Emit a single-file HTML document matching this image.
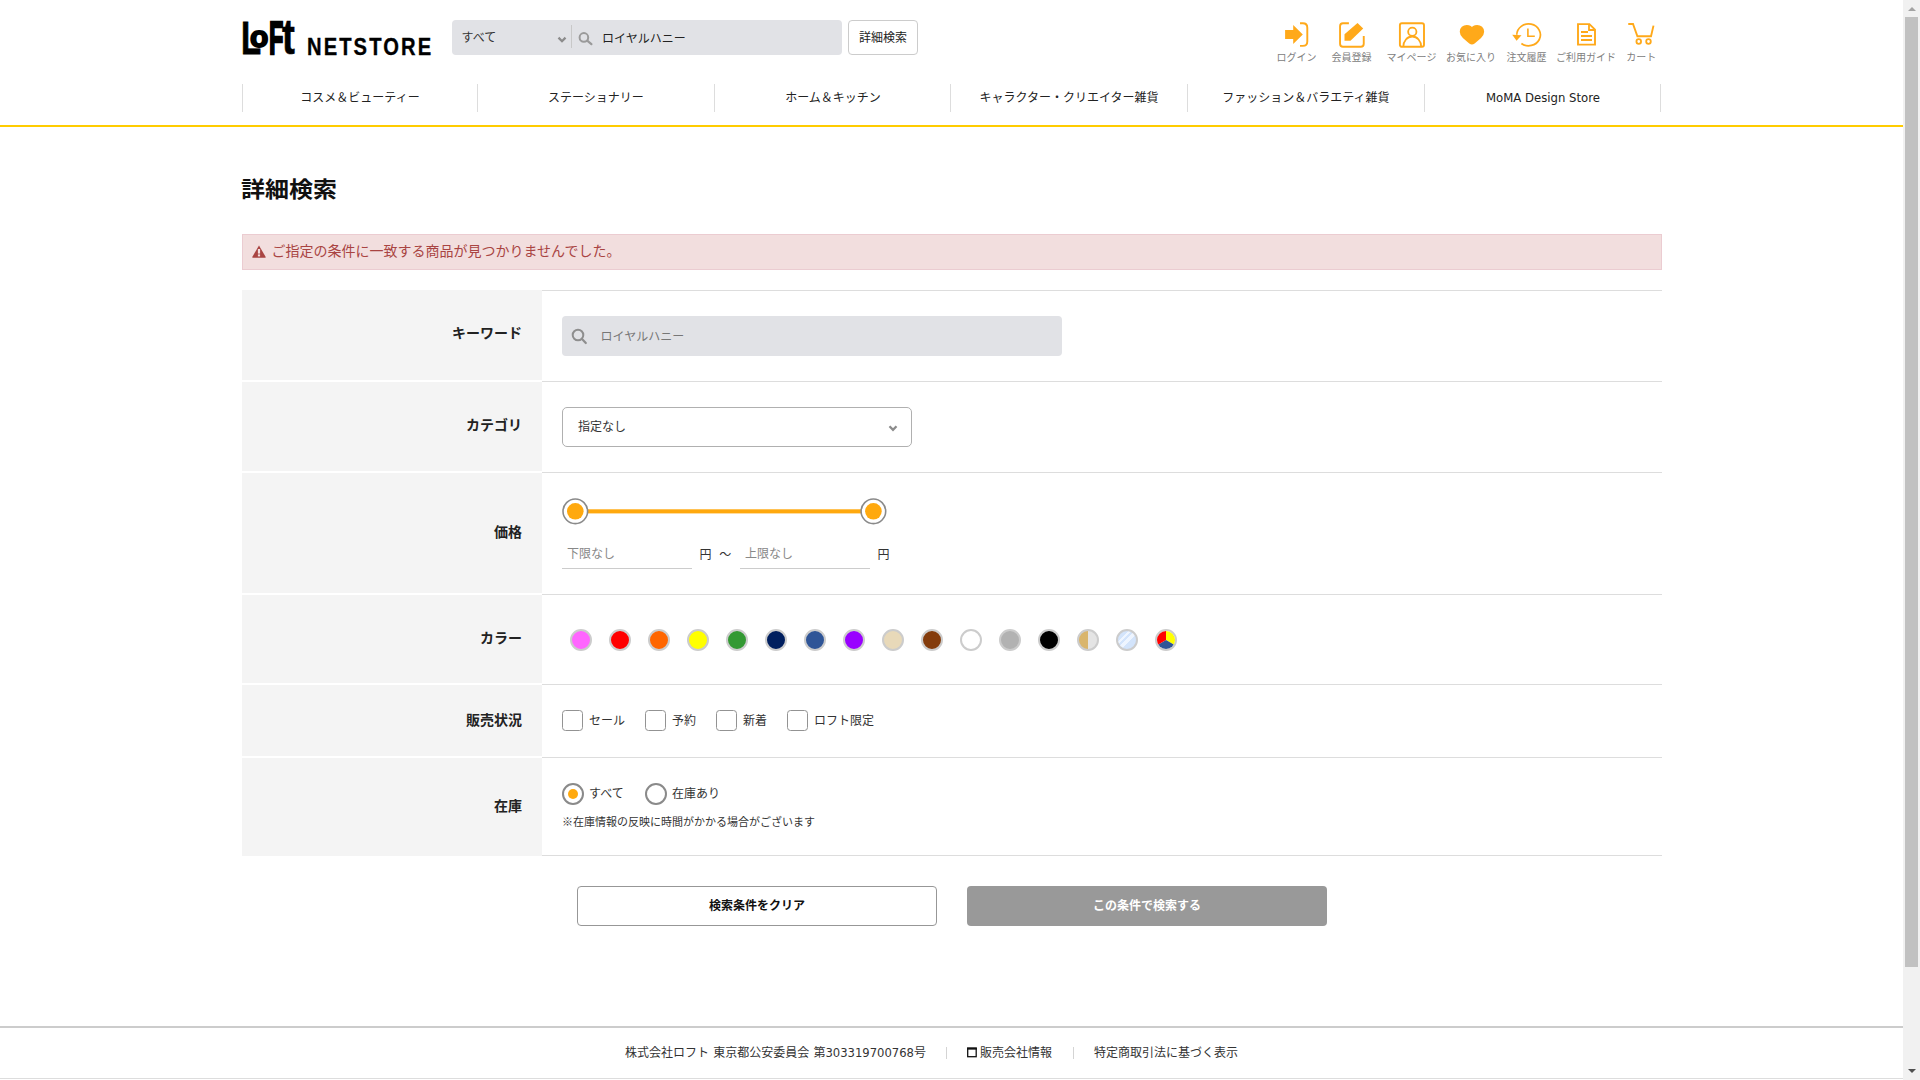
<!DOCTYPE html>
<html lang="ja">
<head>
<meta charset="utf-8">
<title>詳細検索 | ロフトネットストア</title>
<style>
*{box-sizing:border-box;margin:0;padding:0}
html,body{width:1920px;height:1080px;overflow:hidden;background:#fff}
body{position:relative;font-family:"Liberation Sans","Noto Sans CJK JP",sans-serif;color:#222;font-size:12px;line-height:1}
.abs{position:absolute}
.k12{font-size:12px}
.k14{font-size:14px}
.k10{font-size:10px}
.t{position:absolute;white-space:nowrap;line-height:1}
/* scrollbar */
#sb{position:absolute;left:1903px;top:0;width:17px;height:1080px;background:#f1f1f1}
#sb .thumb{position:absolute;left:2px;top:17px;width:13px;height:950px;background:#c1c1c1}
#sb .up,#sb .dn{position:absolute;left:4.5px;width:0;height:0;border-left:4px solid transparent;border-right:4px solid transparent}
#sb .up{top:7px;border-bottom:4px solid #a3a3a3}
#sb .dn{top:1069px;border-top:4px solid #505050}
/* header */
#logo{position:absolute;left:242px;top:20px;width:190px;height:36px}
#search{position:absolute;left:452px;top:20px;width:390px;height:35px;background:#e1e2e6;border-radius:4px}
#search .div{position:absolute;left:119px;top:5px;width:1px;height:23px;background:#c8c8c8}
#adv{position:absolute;left:848px;top:20px;width:70px;height:35px;border:1px solid #ccc;border-radius:4px;background:#fff;text-align:center;line-height:35px;font-size:12px;color:#222}
.hi{position:absolute;top:53.4px;font-size:10px;color:#808080;transform:translateX(-50%);white-space:nowrap;line-height:10px}
.ic{position:absolute;overflow:visible}
.lg{position:absolute;font-weight:bold;color:#000;line-height:1;white-space:nowrap;transform-origin:0 0;font-family:"Liberation Sans",sans-serif}
/* nav */
.sep{position:absolute;top:84px;width:1px;height:28px;background:#ddd}
.nv{position:absolute;top:84px;width:236px;height:28px;line-height:29px;text-align:center;font-size:12px;color:#222;white-space:nowrap}
#yl{position:absolute;left:0;top:125px;width:1903px;height:2px;background:#ffcc00}
/* main */
h1{position:absolute;left:241px;top:177.4px;font-size:24px;font-weight:bold;line-height:24px;color:#111;white-space:nowrap;transform:scaleY(.92);transform-origin:0 100%}
#alert{position:absolute;left:242px;top:234px;width:1420px;height:36px;background:#f2dede;border:1px solid #ebccd1;color:#a94442;font-size:14px}
.th{position:absolute;left:242px;width:300px;background:#f4f4f4}
.th span{position:absolute;right:20px;font-size:14px;font-weight:bold;color:#222;white-space:nowrap;line-height:14px}
.ln{position:absolute;left:542px;width:1120px;height:1px;background:#ddd}
#kw{position:absolute;left:562px;top:316px;width:500px;height:40px;background:#e1e2e6;border-radius:4px}
#cat{position:absolute;left:562px;top:407px;width:350px;height:40px;border:1px solid #b0b0b0;border-radius:5px;background:#fff}
.pin{position:absolute;top:540px;width:130px;height:29px;border-bottom:1px solid #ccc}
.pin span{position:absolute;left:5px;top:8px;font-size:12px;color:#888;line-height:12px}
.cc{position:absolute;top:629px;width:22px;height:22px;border-radius:50%;border:2px solid #ccc;overflow:hidden}
.cb{position:absolute;top:710px;width:21px;height:21px;border:1px solid #939393;border-radius:3.5px;background:#fff}
.cl{position:absolute;top:715.3px;font-size:12px;color:#333;line-height:12px;white-space:nowrap}
.rd{position:absolute;top:783px;width:22px;height:22px;border:2px solid #8a8a8a;border-radius:50%;background:#fff}
.btn{position:absolute;top:886px;width:360px;height:40px;border-radius:4px;text-align:center;font-size:12px;font-weight:bold;line-height:39px}
/* footer */
.ft{position:absolute;top:1047px;font-size:12px;color:#333;line-height:12px;white-space:nowrap}
</style>
</head>
<body>
<!-- HEADER -->
<div id="logo"><span class="lg" style="left:-1.2px;top:-6.2px;font-size:47px;transform:scaleX(.7);-webkit-text-stroke:.8px #000">L</span><span class="lg" style="left:8px;top:1.6px;font-size:30px;-webkit-text-stroke:1.8px #000">o</span><span class="lg" style="left:26.9px;top:-6.2px;font-size:47px;transform:scaleX(.5);-webkit-text-stroke:2.4px #000">F</span><span class="lg" style="left:39.5px;top:-8.9px;font-size:47px;transform:scale(.82,1.07);-webkit-text-stroke:.6px #000">t</span> <span class="lg" style="left:65px;top:14.6px;font-size:24px;letter-spacing:2.5px;transform:scaleX(.84);-webkit-text-stroke:.35px #000">NETSTORE</span></div>
<div id="search">
  <span class="t k12" style="left:9.5px;top:12px;color:#333">すべて</span>
  <svg class="ic" style="left:105.2px;top:15.6px" width="10" height="8" viewBox="0 0 10 8"><path d="M1.5 1.6 L5 5.2 L8.5 1.6" fill="none" stroke="#8c8c8c" stroke-width="2.3"/></svg>
  <div class="div"></div>
  <svg class="ic" style="left:125px;top:10px" width="18" height="18" viewBox="0 0 18 18"><circle cx="6.9" cy="7.4" r="4.3" fill="none" stroke="#9a9a9a" stroke-width="2"/><path d="M10.2 10.7 L14.4 14.2" stroke="#9a9a9a" stroke-width="2.2" stroke-linecap="round"/></svg>
  <span class="t k12" style="left:150px;top:12.5px;color:#222">ロイヤルハニー</span>
</div>
<div id="adv">詳細検索</div>

<div id="icons">
<!-- login -->
<svg class="ic" style="left:1282px;top:21px" width="28" height="28" viewBox="0 0 28 28"><polygon points="3.1,9.1 11.2,9.1 11.2,4.1 20.8,13.6 11.2,23.1 11.2,17.9 3.1,17.9" fill="#ffa91a"/><path d="M18 2.2 H20.8 Q25.3 2.2 25.3 6.7 V20.4 Q25.3 24.9 20.8 24.9 H18" fill="none" stroke="#ffa91a" stroke-width="1.9"/></svg>
<span class="hi" style="left:1296.5px">ログイン</span>
<!-- register -->
<svg class="ic" style="left:1338px;top:21px" width="28" height="28" viewBox="0 0 28 28"><path d="M10.9 2.2 H5 Q2.05 2.2 2.05 5.2 V22.8 Q2.05 25.75 5 25.75 H22.8 Q25.75 25.75 25.75 22.8 V15" fill="none" stroke="#ffa91a" stroke-width="1.9"/><polygon points="6.5,19.7 6.5,13.2 19.5,2 25.2,7.5 12.5,19.7" fill="#ffa91a"/></svg>
<span class="hi" style="left:1351.6px">会員登録</span>
<!-- mypage -->
<svg class="ic" style="left:1398px;top:21px" width="28" height="28" viewBox="0 0 28 28"><rect x="1.9" y="2.2" width="24.1" height="23.6" rx="2" fill="none" stroke="#ffa91a" stroke-width="1.9"/><circle cx="14.3" cy="10.7" r="4.15" fill="none" stroke="#ffa91a" stroke-width="1.8"/><path d="M5.3 25.8 A8.95 10.3 0 0 1 23.2 25.8" fill="none" stroke="#ffa91a" stroke-width="1.8"/></svg>
<span class="hi" style="left:1411.5px">マイページ</span>
<!-- favorite -->
<svg class="ic" style="left:1458px;top:21px" width="28" height="28" viewBox="0 0 28 28"><path d="M13.95 8.6 C13 6.7 11 5.6 8.8 5.6 C5.7 5.6 3.4 7.8 3.4 10.7 C3.4 13 4.6 14.6 6.2 16.1 L12.3 21.2 Q13.95 22.5 15.6 21.2 L21.7 16.1 C23.3 14.6 24.5 13 24.5 10.7 C24.5 7.8 22.2 5.6 19.1 5.6 C16.9 5.6 14.9 6.7 13.95 8.6 Z" fill="#ffa91a" stroke="#ffa91a" stroke-width="3.3" stroke-linejoin="round"/></svg>
<span class="hi" style="left:1471px">お気に入り</span>
<!-- history -->
<svg class="ic" style="left:1511px;top:21px" width="32" height="28" viewBox="0 0 32 28"><path d="M5.8 13.85 A11.8 10.9 0 1 1 10.4 22.5" fill="none" stroke="#ffa91a" stroke-width="1.75"/><polygon points="1.2,13.7 10.5,14.3 5.6,19.7" fill="#ffa91a"/><path d="M16.9 7.4 V15.3 H23.8" fill="none" stroke="#ffa91a" stroke-width="1.6"/></svg>
<span class="hi" style="left:1526.5px">注文履歴</span>
<!-- guide -->
<svg class="ic" style="left:1576px;top:21px" width="22" height="28" viewBox="0 0 22 28"><path d="M2 3.1 H13.4 L19 8.6 V23.6 H2 Z" fill="none" stroke="#ffa91a" stroke-width="1.9"/><path d="M13 3.4 V9 H18.8" fill="none" stroke="#ffa91a" stroke-width="1.8"/><path d="M5 10.9 H12 M5 15 H16 M5 19 H16" stroke="#ffa91a" stroke-width="2"/></svg>
<span class="hi" style="left:1586px">ご利用ガイド</span>
<!-- cart -->
<svg class="ic" style="left:1627px;top:21px" width="28" height="28" viewBox="0 0 28 28"><path d="M1.25 3 H6 L10.4 15.3 H24 L26.5 4.6" fill="none" stroke="#ffa91a" stroke-width="1.9"/><circle cx="11.75" cy="20.5" r="2.3" fill="none" stroke="#ffa91a" stroke-width="1.8"/><circle cx="21.5" cy="20.5" r="2.3" fill="none" stroke="#ffa91a" stroke-width="1.8"/></svg>
<span class="hi" style="left:1641.3px">カート</span>
</div>

<!-- NAV -->
<div id="nav">
<i class="sep" style="left:242px"></i><i class="sep" style="left:477px"></i><i class="sep" style="left:714px"></i><i class="sep" style="left:950px"></i><i class="sep" style="left:1187px"></i><i class="sep" style="left:1424px"></i><i class="sep" style="left:1660px"></i>
<div class="nv" style="left:242px">コスメ＆ビューティー</div>
<div class="nv" style="left:478px">ステーショナリー</div>
<div class="nv" style="left:715px">ホーム＆キッチン</div>
<div class="nv" style="left:951px">キャラクター・クリエイター雑貨</div>
<div class="nv" style="left:1188px">ファッション＆バラエティ雑貨</div>
<div class="nv" style="left:1425px;font-family:'DejaVu Sans','Liberation Sans',sans-serif;font-size:11.7px;line-height:28.5px">MoMA Design Store</div>
</div>
<div id="yl"></div>

<!-- MAIN -->
<h1>詳細検索</h1>
<div id="alert">
  <svg class="ic" style="left:9px;top:9.6px" width="14" height="13" viewBox="0 0 14 13"><path d="M7 0.4 L13.6 11.8 Q13.9 12.8 12.9 12.8 H1.1 Q0.1 12.8 0.4 11.8 Z" fill="#a94442"/><rect x="5.9" y="4" width="2.2" height="4.6" fill="#f2dede"/><rect x="5.9" y="9.4" width="2.2" height="2" fill="#f2dede"/></svg>
  <span class="t" style="left:28.5px;top:9px;font-size:14px;line-height:14px">ご指定の条件に一致する商品が見つかりませんでした。</span>
</div>

<div id="form">
<!-- left header cells -->
<div class="th" style="top:290px;height:90px"><span style="top:36.4px">キーワード</span></div>
<div class="th" style="top:382px;height:89px"><span style="top:36.4px">カテゴリ</span></div>
<div class="th" style="top:473px;height:120px"><span style="top:52px">価格</span></div>
<div class="th" style="top:595px;height:88px"><span style="top:36px">カラー</span></div>
<div class="th" style="top:685px;height:71px"><span style="top:28px">販売状況</span></div>
<div class="th" style="top:758px;height:98px"><span style="top:41px">在庫</span></div>
<!-- right borders -->
<i class="ln" style="top:290px"></i><i class="ln" style="top:381px"></i><i class="ln" style="top:472px"></i><i class="ln" style="top:594px"></i><i class="ln" style="top:684px"></i><i class="ln" style="top:757px"></i><i class="ln" style="top:855px"></i>

<!-- keyword -->
<div id="kw">
  <svg class="ic" style="left:8px;top:11px" width="20" height="20" viewBox="0 0 20 20"><circle cx="8" cy="8" r="5.3" fill="none" stroke="#8e8e8e" stroke-width="2"/><path d="M12 12 L15.8 16" stroke="#8e8e8e" stroke-width="2.2" stroke-linecap="round"/></svg>
  <span class="t" style="left:38.5px;top:14.8px;font-size:12px;color:#777">ロイヤルハニー</span>
</div>
<!-- category -->
<div id="cat">
  <span class="t" style="left:15px;top:13px;font-size:12px;color:#333">指定なし</span>
  <svg class="ic" style="left:325px;top:17px" width="10" height="8" viewBox="0 0 10 8"><path d="M1.5 1.2 L5 4.8 L8.5 1.2" fill="none" stroke="#8c8c8c" stroke-width="2.3"/></svg>
</div>
<!-- price -->
<svg class="ic" style="left:556px;top:492px" width="330" height="40" viewBox="0 0 330 40"><rect x="19" y="17.3" width="298" height="4.1" fill="#ffa90e"/><circle cx="19.3" cy="19.3" r="12.3" fill="#fff" stroke="#8a8a8a" stroke-width="1.6"/><circle cx="19.3" cy="19.3" r="8.3" fill="#ffa90e"/><circle cx="317.4" cy="19.3" r="12.3" fill="#fff" stroke="#8a8a8a" stroke-width="1.6"/><circle cx="317.4" cy="19.3" r="8.3" fill="#ffa90e"/></svg>
<div class="pin" style="left:562px"><span>下限なし</span></div>
<span class="t" style="left:699.5px;top:549px;font-size:12px;color:#333">円</span>
<span class="t" style="left:719.3px;top:549px;font-size:12px;color:#333">～</span>
<div class="pin" style="left:740px"><span>上限なし</span></div>
<span class="t" style="left:877.5px;top:549px;font-size:12px;color:#333">円</span>
<!-- colors -->
<div id="colors">
<i class="cc" style="left:570px;background:#ff66ff"></i><i class="cc" style="left:609px;background:#ff0000"></i><i class="cc" style="left:648px;background:#ff6600"></i><i class="cc" style="left:687px;background:#ffff00"></i><i class="cc" style="left:726px;background:#339933"></i><i class="cc" style="left:765px;background:#001f5f"></i><i class="cc" style="left:804px;background:#2f5597"></i><i class="cc" style="left:843px;background:#9900ff"></i><i class="cc" style="left:882px;background:#e8d9b9"></i><i class="cc" style="left:921px;background:#843c0c"></i><i class="cc" style="left:960px;background:#ffffff"></i><i class="cc" style="left:999px;background:#b2b2b2"></i><i class="cc" style="left:1038px;background:#000000"></i><i class="cc" style="left:1077px;background:linear-gradient(90deg,#d9b56c 0,#d9b56c 50%,#e4e4e4 50%,#e4e4e4 100%)"></i><i class="cc" style="left:1116px;background:linear-gradient(135deg,#d3e4fb 0,#d3e4fb 30%,#eef5ff 30%,#eef5ff 38%,#d3e4fb 38%,#d3e4fb 46%,#eef5ff 46%,#eef5ff 60%,#d3e4fb 60%)"></i><i class="cc" style="left:1155px;background:#fff"><svg style="position:absolute;left:0;top:0" width="18" height="18" viewBox="-9 -9 18 18"><path d="M0 0 L0 -13 A13 13 0 0 1 11.26 6.5 Z" fill="#ffff00"/><path d="M0 0 L11.26 6.5 A13 13 0 0 1 -11.26 6.5 Z" fill="#2f5597"/><path d="M0 0 L-11.26 6.5 A13 13 0 0 1 0 -13 Z" fill="#ff0000"/></svg></i>
</div>
<!-- sales status -->
<i class="cb" style="left:562px"></i><span class="cl" style="left:589px">セール</span>
<i class="cb" style="left:645px"></i><span class="cl" style="left:672px">予約</span>
<i class="cb" style="left:716px"></i><span class="cl" style="left:743px">新着</span>
<i class="cb" style="left:787px"></i><span class="cl" style="left:814px">ロフト限定</span>
<!-- stock -->
<i class="rd" style="left:562px"><b style="position:absolute;left:4px;top:4px;width:10px;height:10px;border-radius:50%;background:#ffa90e"></b></i><span class="cl" style="left:589px;top:788px">すべて</span>
<i class="rd" style="left:645px"></i><span class="cl" style="left:672px;top:788px">在庫あり</span>
<span class="t" style="left:562px;top:817px;font-size:11px;color:#333">※在庫情報の反映に時間がかかる場合がございます</span>
<!-- buttons -->
<div class="btn" style="left:577px;border:1px solid #979797;background:#fff;color:#111">検索条件をクリア</div>
<div class="btn" style="left:967px;background:#999;color:#fff;line-height:41px">この条件で検索する</div>
</div>

<!-- FOOTER -->
<div class="abs" style="left:0;top:1026px;width:1903px;height:2px;background:#ccc"></div>
<div class="abs" style="left:0;top:1078px;width:1903px;height:1px;background:#ddd"></div>
<div id="footer">
<span class="ft" style="left:625px;word-spacing:.9px">株式会社ロフト 東京都公安委員会 第<span style="font-family:'DejaVu Sans','Liberation Sans',sans-serif;font-size:11.6px">303319700768</span>号</span>
<i class="abs" style="left:946px;top:1047px;width:1px;height:12px;background:#d4d4d4"></i>
<svg class="ic" style="left:967px;top:1047px" width="10" height="11" viewBox="0 0 10 11"><rect x="0.7" y="1.2" width="8.5" height="8.5" fill="none" stroke="#111" stroke-width="1.3"/><rect x="0.05" y="0.55" width="9.8" height="2.1" fill="#111"/></svg>
<span class="ft" style="left:980px">販売会社情報</span>
<i class="abs" style="left:1073px;top:1047px;width:1px;height:12px;background:#d4d4d4"></i>
<span class="ft" style="left:1094px">特定商取引法に基づく表示</span>
</div>

<!-- SCROLLBAR -->
<div id="sb"><div class="up"></div><div class="thumb"></div><div class="dn"></div></div>
</body>
</html>
